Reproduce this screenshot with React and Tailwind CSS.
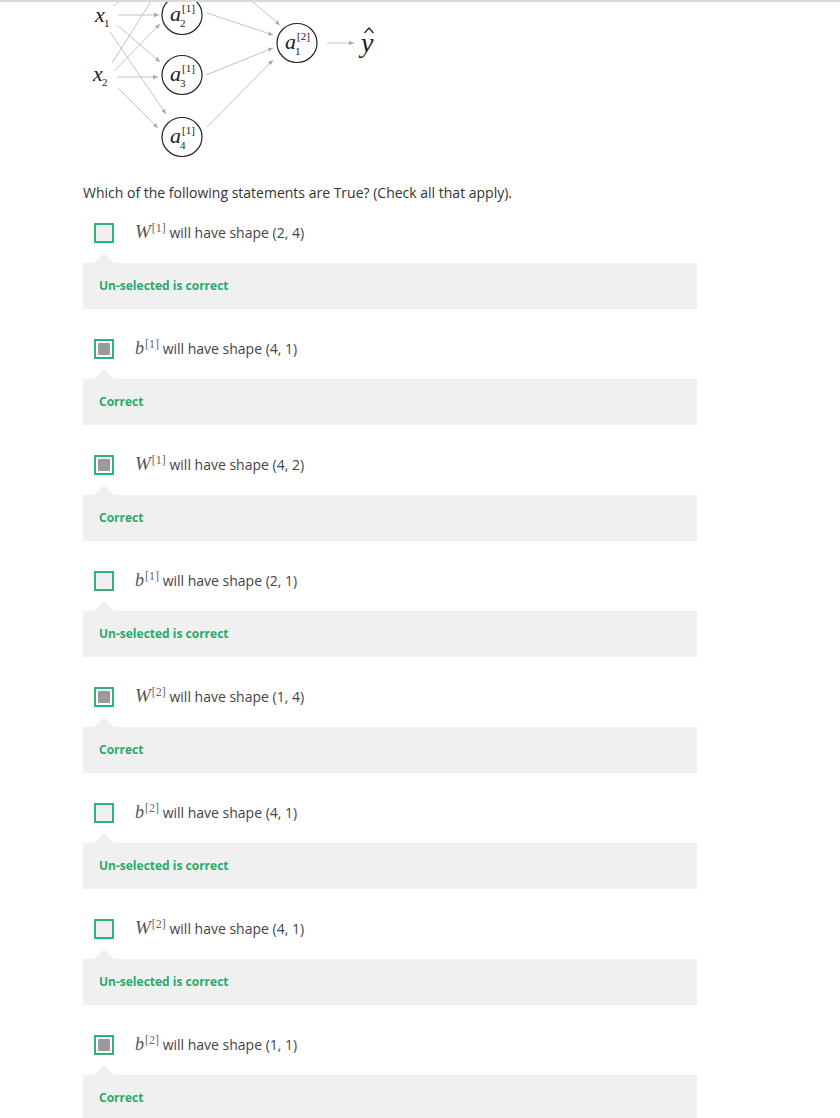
import React from 'react';

const items = [
  { v: 'W', s: '1', shape: '(2, 4)', checked: false },
  { v: 'b', s: '1', shape: '(4, 1)', checked: true },
  { v: 'W', s: '1', shape: '(4, 2)', checked: true },
  { v: 'b', s: '1', shape: '(2, 1)', checked: false },
  { v: 'W', s: '2', shape: '(1, 4)', checked: true },
  { v: 'b', s: '2', shape: '(4, 1)', checked: false },
  { v: 'W', s: '2', shape: '(4, 1)', checked: false },
  { v: 'b', s: '2', shape: '(1, 1)', checked: true },
];

function Node({ cx, cy, sub, sup }) {
  return (
    <g>
      <ellipse cx={cx} cy={cy} rx="20" ry="19.5" fill="white" stroke="#222" strokeWidth="1.2" />
      <text x={cx - 12} y={cy + 6} fontSize="22" fontStyle="italic" fontFamily="Liberation Serif, serif" fill="#222">a</text>
      <text x={cx - 2} y={cy + 12} fontSize="11" fontFamily="Liberation Serif, serif" fill="#222">{sub}</text>
      <text x={cx} y={cy - 3} fontSize="11" fontFamily="Liberation Serif, serif" fill="#222">{sup}</text>
    </g>
  );
}

function Diagram() {
  const lines = [
    [118, 15, 159, 15, true],
    [117, 25, 160, 62, true],
    [110, 32, 166, 114, true],
    [113, 6, 124, -2, false],
    [112, 63, 153, -2, false],
    [115, 70, 160, 24, true],
    [118, 77, 158, 77, true],
    [118, 88, 158, 128, true],
    [207, 13, 273, 35, true],
    [206, 75, 273, 48, true],
    [207, 127, 273, 60, true],
    [248, -2, 280, 25, true],
    [327, 43, 354, 43, true],
  ];
  return (
    <svg width="420" height="163" viewBox="0 2 420 163" className="block">
      <defs>
        <marker id="ah" markerWidth="6" markerHeight="6" refX="5" refY="3" orient="auto" markerUnits="userSpaceOnUse">
          <path d="M0,0.8 L5,3 L0,5.2 Z" fill="#aaa" />
        </marker>
      </defs>
      {lines.map(([x1, y1, x2, y2, arrow], i) => (
        <line key={i} x1={x1} y1={y1} x2={x2} y2={y2} stroke="#bdbdbd" strokeWidth="0.9" markerEnd={arrow ? 'url(#ah)' : undefined} />
      ))}
      <text x="95" y="22" fontSize="22" fontStyle="italic" fontFamily="Liberation Serif, serif" fill="#222">x</text>
      <text x="104" y="27" fontSize="11" fontFamily="Liberation Serif, serif" fill="#222">1</text>
      <text x="93" y="81" fontSize="22" fontStyle="italic" fontFamily="Liberation Serif, serif" fill="#222">x</text>
      <text x="102" y="86" fontSize="11" fontFamily="Liberation Serif, serif" fill="#222">2</text>
      <Node cx={182} cy={15} sub="2" sup="[1]" />
      <Node cx={182} cy={75} sub="3" sup="[1]" />
      <Node cx={182} cy={137} sub="4" sup="[1]" />
      <Node cx={297} cy={43} sub="1" sup="[2]" />
      <text x="361" y="52" fontSize="28" fontStyle="italic" fontFamily="Liberation Serif, serif" fill="#222">y</text>
      <path d="M364.5,33 L369,28 L373.5,33" fill="none" stroke="#222" strokeWidth="1.2" />
    </svg>
  );
}

function Checkbox({ checked }) {
  if (checked) {
    return (
      <div className="w-5 h-5 border-2 border-[#2eb475] bg-white p-[2px]">
        <div className="w-full h-full bg-[#9a9a9a]" />
      </div>
    );
  }
  return <div className="w-5 h-5 border-2 border-[#2eb475] bg-[#efefef]" />;
}

export default function App() {
  return (
    <div className="min-h-screen bg-white font-['Open_Sans',sans-serif]">
      <div className="h-[2px] bg-[#d9d9d9]" />
      <Diagram />
      <div className="ml-[83px] w-[614px]">
        <p className="mt-[18px] text-[14px] leading-5 text-[#333]">
          Which of the following statements are True? (Check all that apply).
        </p>
        <ul className="mt-5 flex flex-col gap-[30px]">
          {items.map((it, i) => (
            <li key={i}>
              <div className="flex items-center h-5 pl-[11px]">
                <Checkbox checked={it.checked} />
                <span className="ml-[21px] text-[14px] leading-5 text-[#444]">
                  <span className="font-['Liberation_Serif',serif] italic text-[#555]">
                    {it.v === 'W' ? <span className="text-[19px]">W</span> : <span className="text-[18px]">b</span>}
                    <sup className="not-italic text-[12px] ml-[1px] text-[#666]">[{it.s}]</sup>
                  </span>{' '}
                  will have shape {it.shape}
                </span>
              </div>
              <div className="relative mt-5 h-[46px] bg-[#f0f0f0] flex items-center pl-4">
                <div className="absolute -top-[10px] left-[11px] w-0 h-0 border-x-[10px] border-x-transparent border-b-[10px] border-b-[#f0f0f0]" />
                <span className="text-[12px] font-bold text-[#29a96c]">
                  {it.checked ? 'Correct' : 'Un-selected is correct'}
                </span>
              </div>
            </li>
          ))}
        </ul>
      </div>
    </div>
  );
}
